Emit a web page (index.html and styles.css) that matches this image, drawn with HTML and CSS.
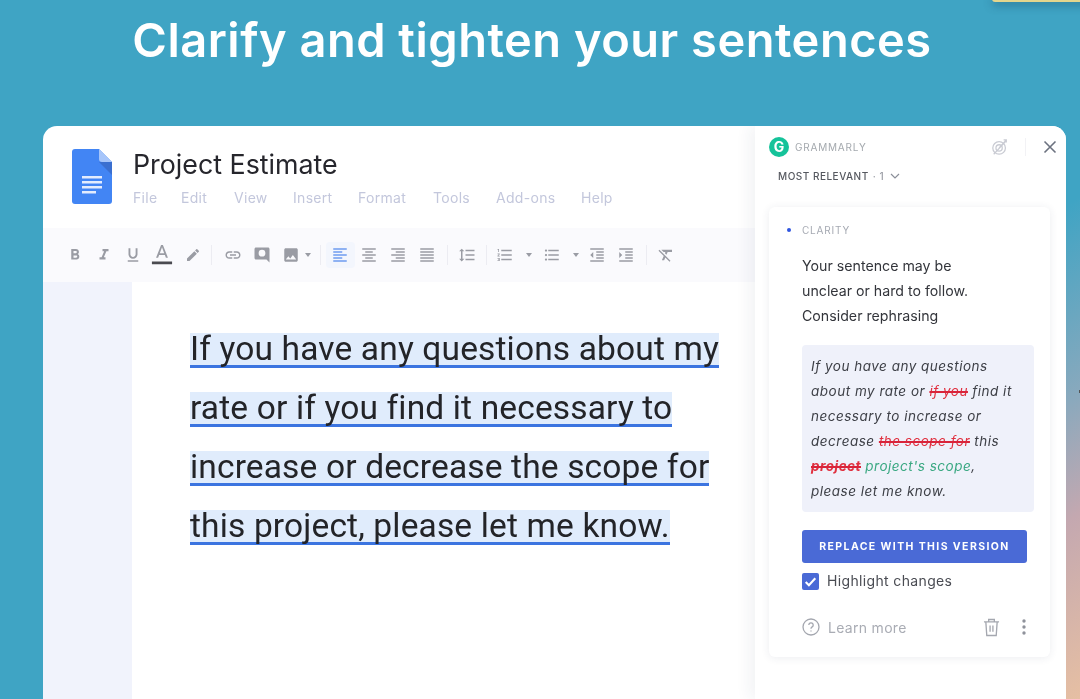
FILE: index.html
```html
<!DOCTYPE html>
<html lang="en">
<head>
  <meta charset="UTF-8">
  <title>Clarify and tighten your sentences</title>
  <link rel="stylesheet" href="styles.css">
</head>
<body>
  <div class="corner-sliver"></div>
  <div class="edge-mark"></div>
  <h1 class="headline">Clarify and tighten your sentences</h1>

  <div class="window">
    <div class="doc">
      <div class="doc-head">
        <svg class="doc-logo" viewBox="0 0 40 55">
          <path d="M3 0h24l13 13v39a3 3 0 0 1-3 3H3a3 3 0 0 1-3-3V3a3 3 0 0 1 3-3z" fill="#4285f4"/>
          <path d="M27 13l13 13V13z" fill="#3a6fd0"/>
          <path d="M27 0l13 13H30a3 3 0 0 1-3-3z" fill="#a6c5fa"/>
          <path d="M10 27h20v2.4H10zM10 32h20v2.4H10zM10 37h20v2.4H10zM10 42h14v2.4H10z" fill="#e3ecfd"/>
        </svg>
        <div>
          <div class="doc-title">Project Estimate</div>
          <div class="menu">
            <span>File</span><span>Edit</span><span>View</span><span>Insert</span><span>Format</span><span>Tools</span><span>Add-ons</span><span>Help</span>
          </div>
        </div>
      </div>

      <div class="toolbar">
        <span class="tool"><svg viewBox="0 0 24 24"><path d="M15.6 10.79c.97-.67 1.65-1.77 1.65-2.79 0-2.26-1.75-4-4-4H7v14h7.04c2.09 0 3.71-1.7 3.71-3.79 0-1.52-.86-2.82-2.15-3.42zM10 6.5h3c.83 0 1.5.67 1.5 1.5s-.67 1.5-1.5 1.5h-3v-3zm3.5 9H10v-3h3.5c.83 0 1.5.67 1.5 1.5s-.67 1.5-1.5 1.5z"/></svg></span>
        <span class="tool"><svg viewBox="0 0 24 24"><path d="M10 4v3h2.21l-3.42 8H6v3h8v-3h-2.21l3.42-8H18V4z"/></svg></span>
        <span class="tool"><svg viewBox="0 0 24 24"><path d="M12 17c3.31 0 6-2.69 6-6V3h-2.5v8c0 1.93-1.57 3.5-3.5 3.5S8.5 12.93 8.5 11V3H6v8c0 3.31 2.69 6 6 6zm-7 2v2h14v-2H5z"/></svg></span>
        <span class="tool tool-color"><svg viewBox="0 0 24 24"><path d="M11 1L5.5 15h2.25l1.12-3h6.25l1.12 3h2.25L13 1h-2zm-1.38 9L12 3.67 14.38 10H9.62z"/><path class="ink" d="M1 19h22v3H1z"/></svg></span>
        <span class="tool tool-pen"><svg viewBox="0 0 24 24"><path d="M3 17.25V21h3.75L17.81 9.94l-3.75-3.75L3 17.25zM20.71 7.04c.39-.39.39-1.02 0-1.41l-2.34-2.34c-.39-.39-1.02-.39-1.41 0l-1.83 1.83 3.75 3.75 1.83-1.83z"/></svg></span>
        <span class="sep sep-wide"></span>
        <span class="tool"><svg viewBox="0 0 24 24"><path d="M3.9 12c0-1.71 1.39-3.1 3.1-3.1h4V7H7c-2.76 0-5 2.24-5 5s2.24 5 5 5h4v-1.9H7c-1.71 0-3.1-1.39-3.1-3.1zM8 13h8v-2H8v2zm9-6h-4v1.9h4c1.71 0 3.1 1.39 3.1 3.1s-1.39 3.1-3.1 3.1h-4V17h4c2.76 0 5-2.24 5-5s-2.24-5-5-5z"/></svg></span>
        <span class="tool"><svg viewBox="0 0 24 24"><path d="M21.99 4c0-1.1-.89-2-1.99-2H4c-1.1 0-2 .9-2 2v12c0 1.1.9 2 2 2h14l4 4-.01-18zM12 5a4.5 4.5 0 1 1 0 9 4.5 4.5 0 0 1 0-9z" fill-rule="evenodd"/></svg></span>
        <span class="tool tool-narrow"><svg viewBox="0 0 24 24"><path d="M21 19V5c0-1.1-.9-2-2-2H5c-1.1 0-2 .9-2 2v14c0 1.1.9 2 2 2h14c1.1 0 2-.9 2-2zM8.5 13.5l2.5 3.01L14.5 12l4.5 6H5l3.5-4.5z"/></svg></span>
        <span class="caret caret-tight"></span>
        <span class="sep"></span>
        <span class="tool tool-active"><svg viewBox="0 0 24 24"><path d="M15 15H3v2h12v-2zm0-8H3v2h12V7zM3 13h18v-2H3v2zm0 8h18v-2H3v2zM3 3v2h18V3H3z"/></svg></span>
        <span class="tool"><svg viewBox="0 0 24 24"><path d="M7 15v2h10v-2H7zm-4 6h18v-2H3v2zm0-8h18v-2H3v2zm4-6v2h10V7H7zM3 3v2h18V3H3z"/></svg></span>
        <span class="tool"><svg viewBox="0 0 24 24"><path d="M3 21h18v-2H3v2zm6-4h12v-2H9v2zm-6-4h18v-2H3v2zm6-4h12V7H9v2zM3 3v2h18V3H3z"/></svg></span>
        <span class="tool"><svg viewBox="0 0 24 24"><path d="M3 21h18v-2H3v2zm0-4h18v-2H3v2zm0-4h18v-2H3v2zm0-4h18V7H3v2zm0-6v2h18V3H3z"/></svg></span>
        <span class="sep"></span>
        <span class="tool"><svg viewBox="0 0 24 24"><path d="M6 7h2.5L5 3.5 1.5 7H4v10H1.5L5 20.5 8.5 17H6V7zm4-2v2h12V5H10zm0 14h12v-2H10v2zm0-6h12v-2H10v2z"/></svg></span>
        <span class="sep sep-slim"></span>
        <span class="tool"><svg viewBox="0 0 24 24"><path d="M2 17h2v.5H3v1h1v.5H2v1h3v-4H2v1zm1-9h1V4H2v1h1v3zm-1 3h1.8L2 13.1v.9h3v-1H3.2L5 10.9V10H2v1zm5-6v2h14V5H7zm0 14h14v-2H7v2zm0-6h14v-2H7v2z"/></svg></span>
        <span class="caret"></span>
        <span class="tool"><svg viewBox="0 0 24 24"><path d="M4 10.5c-.83 0-1.5.67-1.5 1.5s.67 1.5 1.5 1.5 1.5-.67 1.5-1.5-.67-1.5-1.5-1.5zm0-6c-.83 0-1.5.67-1.5 1.5S3.17 7.5 4 7.5 5.5 6.83 5.5 6 4.83 4.5 4 4.5zm0 12c-.83 0-1.5.68-1.5 1.5s.68 1.5 1.5 1.5 1.5-.68 1.5-1.5-.67-1.5-1.5-1.5zM7 19h14v-2H7v2zm0-6h14v-2H7v2zm0-8v2h14V5H7z"/></svg></span>
        <span class="caret caret-tight"></span>
        <span class="tool"><svg viewBox="0 0 24 24"><path d="M11 17h10v-2H11v2zm-8-5l4 4V8l-4 4zm0 9h18v-2H3v2zM3 3v2h18V3H3zm8 6h10V7H11v2zm0 4h10v-2H11v2z"/></svg></span>
        <span class="tool"><svg viewBox="0 0 24 24"><path d="M3 21h18v-2H3v2zM3 8v8l4-4-4-4zm8 9h10v-2H11v2zM3 3v2h18V3H3zm8 6h10V7H11v2zm0 4h10v-2H11v2z"/></svg></span>
        <span class="sep"></span>
        <span class="tool"><svg viewBox="0 0 24 24"><path d="M3.27 5L2 6.27l6.97 6.97L6.5 19h3l1.57-3.66L16.73 21 18 19.73 3.55 5.27 3.27 5zM6 5v.18L8.82 8h2.4l-.72 1.68 2.1 2.1L14.21 8H20V5H6z"/></svg></span>
      </div>

      <div class="doc-body">
        <div class="doc-margin"></div>
        <div class="page">
          <p class="page-text"><span class="flagged">If you have any questions about my rate or if you find it necessary to increase or decrease the scope for this project, please let me know.</span></p>
        </div>
      </div>
    </div>

    <aside class="sidebar">
      <div class="side-head">
        <span class="g-logo">G</span>
        <span class="brand">GRAMMARLY</span>
        <svg class="goal-icon" viewBox="0 0 20 20">
          <circle cx="9" cy="11" r="7"/><circle cx="9" cy="11" r="3.5"/><path d="M9 11L17 2M14 2h3v3M3 18L16 4"/>
        </svg>
        <span class="head-sep"></span>
        <svg class="close-icon" viewBox="0 0 14 14"><path d="M1.5 1.5l11 11M12.5 1.5l-11 11"/></svg>
      </div>
      <div class="relevance">
        <span>MOST RELEVANT</span><span class="rel-count">· 1</span>
        <svg class="chev" viewBox="0 0 10 6"><path d="M1 1l4 4 4-4"/></svg>
      </div>

      <div class="card">
        <div class="kicker"><span class="dot"></span>CLARITY</div>
        <p class="advice">Your sentence may be unclear or hard to follow. Consider rephrasing</p>
        <div class="rewrite">
          If you have any questions about my rate or <del>if you</del> find it necessary to increase or decrease <del>the scope for</del> this <del class="bold">project</del> <ins>project's scope</ins>, please let me know.
        </div>
        <button class="replace">REPLACE WITH THIS VERSION</button>
        <label class="check-row">
          <span class="checkbox"><svg viewBox="0 0 16 16"><path d="M3.5 8.5l3 3 6-6.5"/></svg></span>
          Highlight changes
        </label>
        <div class="card-foot">
          <svg class="help-icon" viewBox="0 0 18 18">
            <circle cx="9" cy="9" r="8"/><path d="M6.8 7a2.2 2.2 0 1 1 3.4 1.9c-.8.5-1.2 1-1.2 1.8"/><path d="M9 12.6v1"/>
          </svg>
          <span class="learn">Learn more</span>
          <svg class="trash-icon" viewBox="0 0 18 20">
            <path d="M1 4h16M6 4V1.5h6V4M3 4l1 14.5h10L15 4M7.5 8v6.5M10.5 8v6.5"/>
          </svg>
          <svg class="more-icon" viewBox="0 0 4 18">
            <circle cx="2" cy="3" r="1.7"/><circle cx="2" cy="9" r="1.7"/><circle cx="2" cy="15" r="1.7"/>
          </svg>
        </div>
      </div>
    </aside>
  </div>
</body>
</html>
```

FILE: styles.css
```css
* {
  box-sizing: border-box;
}
html, body {
  margin: 0;
  height: 699px;
  overflow: hidden;
}
body {
  position: relative;
  display: flex;
  flex-direction: column;
  font-family: 'Inter', 'Liberation Sans', sans-serif;
  background: linear-gradient(150deg, #3fa4c4 0%, #3fa4c4 62%, #8aa9bd 77%, #c4a8b0 86%, #e6bfa3 100%);
}
.corner-sliver {
  position: absolute;
  top: -4px;
  left: 992px;
  width: 100px;
  height: 6px;
  background: #e3d58d;
  border-radius: 4px;
  box-shadow: 0 3px 10px rgba(20,60,90,0.45);
}
.edge-mark {
  position: absolute;
  top: 390px;
  right: 0;
  width: 1px;
  height: 3px;
  background: #555;
}
.headline {
  flex: none;
  height: 126px;
  margin: 0;
  padding: 12px 16px 0 0;
  text-align: center;
  font-size: 47px;
  font-weight: 600;
  letter-spacing: 0.5px;
  line-height: 56px;
  color: #fff;
  filter: blur(0.4px);
}
.window {
  flex: 1;
  display: flex;
  min-height: 0;
  width: 1023px;
  margin-left: 43px;
  background: #fff;
  border-radius: 14px 14px 0 0;
  overflow: hidden;
  filter: blur(0.5px);
}

/* left side, the document */
.doc {
  flex: none;
  width: 712px;
  display: flex;
  flex-direction: column;
}
.doc-head {
  flex: none;
  height: 102px;
  display: flex;
  padding: 23px 0 0 29px;
  gap: 21px;
}
.doc-logo {
  width: 40px;
  height: 55px;
}
.doc-title {
  font-size: 26.8px;
  line-height: 30px;
  color: #26262c;
}
.menu {
  display: flex;
  margin-top: 10px;
  font-size: 14px;
  letter-spacing: 0.3px;
  line-height: 18px;
  color: #c3c7dc;
}
.menu span:nth-child(1) { width: 48px; }
.menu span:nth-child(2) { width: 53px; }
.menu span:nth-child(3) { width: 59px; }
.menu span:nth-child(4) { width: 65px; }
.menu span:nth-child(5) { width: 75px; }
.menu span:nth-child(6) { width: 63px; }
.menu span:nth-child(7) { width: 85px; }
.toolbar {
  flex: none;
  height: 54px;
  display: flex;
  align-items: center;
  padding-left: 17px;
  background: #fafafd;
}
.tool {
  flex: none;
  width: 29px;
  height: 26px;
  display: flex;
  align-items: center;
  justify-content: center;
}
.tool svg {
  width: 18px;
  height: 18px;
  fill: #9a9ca4;
}
.tool-color svg {
  width: 22px;
  height: 22px;
}
.tool-color svg .ink {
  fill: #4a4a50;
}
.tool-pen svg {
  margin-left: 4px;
  width: 16px;
  height: 16px;
}
.tool-narrow {
  margin-right: -6.5px;
}
.tool-active {
  background: #f3f6fd;
  border-radius: 4px;
}
.tool-active svg {
  fill: #6f9cf0;
}
.caret {
  flex: none;
  width: 0;
  height: 0;
  margin: 0 6px;
  border: 3px solid transparent;
  border-top: 4px solid #9a9ca4;
  border-bottom: none;
}
.caret-tight {
  margin-right: 4px;
}
.sep {
  flex: none;
  width: 1px;
  height: 20px;
  margin: 0 5px;
  background: #ececf2;
}
.sep-wide {
  margin: 0 6px;
}
.sep-slim {
  margin: 0 4px;
}
.doc-body {
  flex: 1;
  display: flex;
}
.doc-margin {
  flex: none;
  width: 89px;
  background: #f1f3fc;
}
.page {
  flex: 1;
  padding: 37px 20px 0 58px;
}
.page-text {
  margin: 0;
  font-family: 'Roboto', 'Liberation Sans', sans-serif;
  font-size: 33.5px;
  letter-spacing: 0.15px;
  line-height: 59px;
  color: #232428;
}
.flagged {
  background: linear-gradient(transparent 4px, #e0ecfc 4px, #e0ecfc calc(100% - 3px), #3b74e0 calc(100% - 3px));
}

/* right side, the Grammarly panel */
.sidebar {
  flex: none;
  width: 311px;
  padding: 0 16px 0 14px;
  background: #fff;
  box-shadow: -6px 0 14px rgba(40,50,90,0.06);
}
.side-head {
  display: flex;
  align-items: center;
  height: 20px;
  margin-top: 11px;
}
.g-logo {
  width: 20px;
  height: 20px;
  border-radius: 50%;
  background: #15c39a;
  color: #fff;
  font-size: 14px;
  font-weight: 700;
  line-height: 20px;
  text-align: center;
}
.brand {
  margin-left: 6px;
  font-size: 10px;
  letter-spacing: 0.8px;
  color: #a4a9ae;
}
.goal-icon {
  width: 18px;
  height: 18px;
  margin-left: auto;
  fill: none;
  stroke: #c9cbd3;
  stroke-width: 1.4;
}
.head-sep {
  width: 1px;
  height: 18px;
  margin: 0 17px 0 16px;
  background: #f2f2f5;
}
.close-icon {
  width: 14px;
  height: 14px;
  margin-right: -7px;
  fill: none;
  stroke: #6c7280;
  stroke-width: 1.6;
}
.relevance {
  display: flex;
  align-items: center;
  margin: 12px 0 0 9px;
  height: 14px;
  font-size: 10px;
  font-weight: 500;
  letter-spacing: 0.5px;
  color: #55585f;
}
.rel-count {
  margin-left: 4px;
  color: #9a9da5;
}
.chev {
  width: 10px;
  height: 6px;
  margin-left: 6px;
  fill: none;
  stroke: #8b8f99;
  stroke-width: 1.2;
}
.card {
  height: 450px;
  margin-top: 24px;
  padding: 17px 16px 0 33px;
  border-radius: 6px;
  box-shadow: 0 1px 8px rgba(40,50,90,0.09);
}
.kicker {
  position: relative;
  font-size: 10px;
  line-height: 12px;
  letter-spacing: 0.8px;
  color: #a6aab3;
}
.dot {
  position: absolute;
  left: -15px;
  top: 4px;
  width: 4px;
  height: 4px;
  border-radius: 50%;
  background: #2f55e0;
}
.advice {
  width: 190px;
  margin: 17px 0 0;
  font-size: 14.2px;
  line-height: 25px;
  color: #33353b;
}
.rewrite {
  width: 232px;
  height: 167px;
  margin-top: 17px;
  padding: 9px 15px 0 9px;
  border-radius: 4px;
  background: #eff1fa;
  font-size: 13.5px;
  letter-spacing: 0.5px;
  font-style: italic;
  line-height: 25px;
  color: #3e4047;
}
.rewrite del {
  color: #e0303f;
  text-decoration-color: #d9243a;
  text-decoration-thickness: 1.5px;
}
.rewrite del.bold {
  font-weight: 700;
}
.rewrite ins {
  color: #3aa882;
  text-decoration: none;
}
.replace {
  display: block;
  width: 225px;
  height: 33px;
  margin-top: 18px;
  border: none;
  border-radius: 3px;
  background: #4a6ad6;
  color: #fff;
  font-family: inherit;
  font-size: 10.5px;
  font-weight: 700;
  letter-spacing: 1.4px;
}
.check-row {
  display: flex;
  align-items: center;
  margin-top: 9px;
  font-size: 14px;
  letter-spacing: 0.35px;
  line-height: 18px;
  color: #4a4c53;
}
.checkbox {
  width: 17px;
  height: 17px;
  margin-right: 8px;
  border-radius: 2px;
  background: #4a6ad6;
}
.checkbox svg {
  display: block;
  fill: none;
  stroke: #fff;
  stroke-width: 2;
}
.card-foot {
  display: flex;
  align-items: center;
  margin-top: 27px;
  height: 20px;
}
.help-icon {
  width: 18px;
  height: 18px;
  fill: none;
  stroke: #a4a7af;
  stroke-width: 1.3;
}
.learn {
  margin-left: 8px;
  font-size: 14px;
  letter-spacing: 0.3px;
  color: #a9acb4;
}
.trash-icon {
  width: 17px;
  height: 19px;
  margin-left: auto;
  fill: none;
  stroke: #a4a7af;
  stroke-width: 1.4;
}
.more-icon {
  width: 4px;
  height: 18px;
  margin: 0 8px 0 22px;
  fill: #8f929b;
}
```
